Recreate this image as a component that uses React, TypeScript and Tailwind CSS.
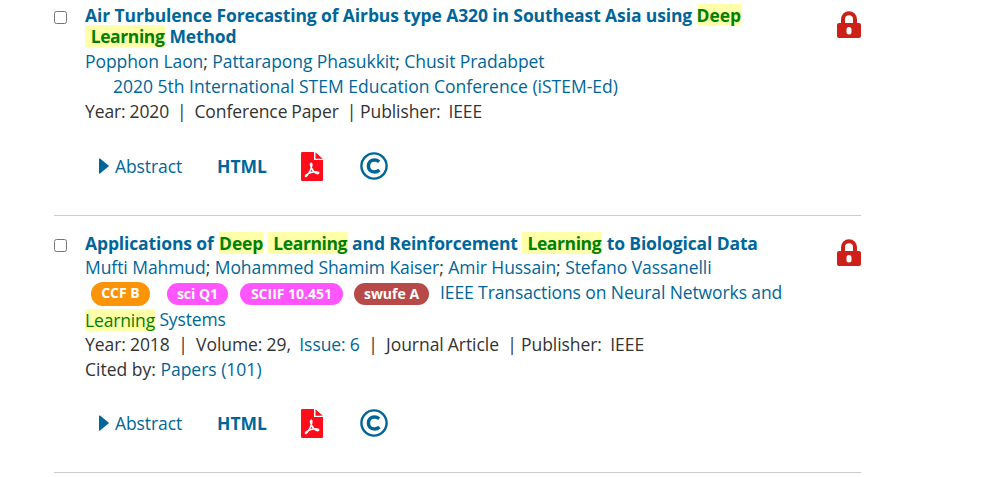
import type { ReactNode } from "react";

function Mark({ children, className = "" }: { children: ReactNode; className?: string }) {
  return <span className={`inline-block h-[22px] bg-[#ffffaa] py-px leading-[20px] text-[#008000] ${className}`}>{children}</span>;
}

function LockIcon() {
  return (
    <svg className="block h-7 w-6" viewBox="0 0 24 28" fill="none">
      <path d="M6 14V8.2a6 6 0 0 1 12 0V14" stroke="#cc2118" strokeWidth="4" />
      <path fillRule="evenodd" fill="#cc2118" d="M2 12H22a2 2 0 0 1 2 2V25a2 2 0 0 1-2 2H2a2 2 0 0 1-2-2V14a2 2 0 0 1 2-2ZM12 16a2.5 2.5 0 0 0-2.5 2.5V21a2.5 2.5 0 0 0 5 0V18.5A2.5 2.5 0 0 0 12 16Z" />
    </svg>
  );
}

function PdfIcon() {
  return (
    <svg className="block h-[29px] w-[22px]" viewBox="0 0 22 29" fill="none">
      <path fill="#ff0d1b" d="M1.2 0H13v8h9v19.8a1.2 1.2 0 0 1-1.2 1.2H1.2A1.2 1.2 0 0 1 0 27.8V1.2A1.2 1.2 0 0 1 1.2 0ZM14.5 0.3L21.7 6.7H14.5Z" />
      <path d="M10.3 11.2C9 11.2 9.4 14 11 17C12.7 20.3 15.5 22 17.2 21.5C18.7 20.8 16.5 19.5 12.8 20C8.8 20.5 4.5 22.5 4.4 24C4.6 25.5 7 22.8 9 19C10.7 15.5 11.4 11.5 10.3 11.2Z" stroke="#fff" strokeWidth="1.6" />
    </svg>
  );
}

function CopyrightIcon() {
  return (
    <svg className="block size-7" viewBox="0 0 28 28" fill="none" stroke="#006699">
      <circle cx="14" cy="14" r="12.6" strokeWidth="2.4" />
      <path d="M19.2 9.8C17.7 8.5 16.2 8 14.5 8C10.7 8 8.4 10.4 8.4 14C8.4 17.6 10.7 20 14.5 20C16.3 20 18 19.4 19.4 18" strokeWidth="3.5" />
    </svg>
  );
}

function Line({ children, className = "" }: { children: ReactNode; className?: string }) {
  return <div className={`flex h-[25px] items-center whitespace-pre leading-[25px] ${className}`}>{children}</div>;
}

function Title({ children, className }: { children: ReactNode; className: string }) {
  return <div className={`flex h-[21px] items-baseline whitespace-pre font-bold leading-[20px] ${className}`}>{children}</div>;
}

function Actions() {
  return (
    <div className="flex h-[30px] items-center pl-[14px] text-[#006699]">
      <svg className="mr-[6px] h-4 w-[10px]" viewBox="0 0 10 16"><path d="M0 1Q0 0 1 .6L9.5 7.4Q10 8 9.5 8.6L1 15.4Q0 16 0 15Z" fill="#006699" /></svg>
      <span className="mt-px w-[102px] tracking-[-0.1px]">Abstract</span>
      <span className="mt-px w-[84px] font-bold">HTML</span>
      <span className="w-[59px]"><PdfIcon /></span>
      <CopyrightIcon />
    </div>
  );
}

function Row({ children, className }: { children: ReactNode; className: string }) {
  return (
    <article className={`ml-[54px] flex w-[807px] border-b border-[#cccccc] ${className}`}>
      <input type="checkbox" className="mt-[7px] mr-[18px] size-[13px] shrink-0" />
      <div className="w-[752px] shrink-0">{children}</div>
      <div className="mt-[7px]"><LockIcon /></div>
    </article>
  );
}

export default function App() {
  return (
    <main className="h-[477px] w-[985px] overflow-hidden bg-white font-['Open_Sans','Noto_Sans',sans-serif] text-[17.5px] text-[#006699]">
      <Row className="h-[216px] pt-[4px]">
        <Title className="tracking-[-0.11px]"><span>Air Turbulence Forecasting of Airbus type A320 in Southeast Asia using </span><Mark>Deep</Mark></Title>
        <Title className="tracking-[-0.13px]"><Mark className="w-[80px] pl-[1.5px] tracking-[-0.4px]"> Learning</Mark><span> Method</span></Title>
        <Line className="mt-[3px] tracking-[-0.07px]"><span>Popphon Laon<i className="not-italic text-[#333]">;</i> Pattarapong Phasukkit<i className="not-italic text-[#333]">;</i> Chusit Pradabpet</span></Line>
        <Line className="pl-7"><span>2020 5th International STEM Education Conference (iSTEM-Ed)</span></Line>
        <Line className="tracking-[-0.1px] text-[#333] [word-spacing:-0.5px]"><span>Year: 2020  |  Conference Paper  | Publisher:  IEEE</span></Line>
        <div className="h-[27px]" />
        <Actions />
      </Row>
      <Row className="h-[257px] pt-[16px]">
        <Title className="tracking-[-0.13px]"><span>Applications of </span><Mark className="ml-px">Deep</Mark><span> </span><Mark className="w-[80px] pl-[1.5px] tracking-[-0.4px]"> Learning</Mark><span> and Reinforcement </span><Mark className="w-[80px] pl-px tracking-[-0.4px]"> Learning</Mark><span> to Biological Data</span></Title>
        <Line className="mt-[2px] tracking-[-0.06px]"><span>Mufti Mahmud<i className="not-italic text-[#333]">;</i> Mohammed Shamim Kaiser<i className="not-italic text-[#333]">;</i> Amir Hussain<i className="not-italic text-[#333]">;</i> Stefano Vassanelli</span></Line>
        <Line className="pl-[6px] text-[14px]">
          <span className="mt-[3px] mr-[17px] h-[24px] w-[59px] rounded-[12px] bg-[#fb9409] text-center font-bold leading-[22px] text-white">CCF B</span>
          <span className="mt-[3px] mr-[12px] h-[22px] w-[61px] rounded-[11px] bg-[#ff55fe] text-center font-bold leading-[21px] text-white">sci Q1</span>
          <span className="mt-[3px] mr-[11px] h-[22px] w-[103px] rounded-[11px] bg-[#ff55fe] text-center font-bold leading-[21px] text-white">SCIIF 10.451</span>
          <span className="mt-[3px] mr-[11px] h-[22px] w-[75px] rounded-[11px] bg-[#b74a48] text-center font-bold leading-[21px] text-white">swufe A</span>
          <span className="text-[17.5px] tracking-[-0.1px]">IEEE Transactions on Neural Networks and</span>
        </Line>
        <Line className="mt-[2px] tracking-[-0.15px]"><Mark>Learning</Mark><span> Systems</span></Line>
        <Line className="tracking-[-0.06px] text-[#333] [word-spacing:-0.3px]"><span>Year: 2018  |  Volume: 29,  <b className="font-normal text-[#006699]">Issue: 6</b>  |  Journal Article  | Publisher:  IEEE</span></Line>
        <Line className="text-[#333]"><span>Cited by: <b className="font-normal text-[#006699]">Papers (101)</b></span></Line>
        <div className="h-[26px]" />
        <Actions />
      </Row>
    </main>
  );
}
